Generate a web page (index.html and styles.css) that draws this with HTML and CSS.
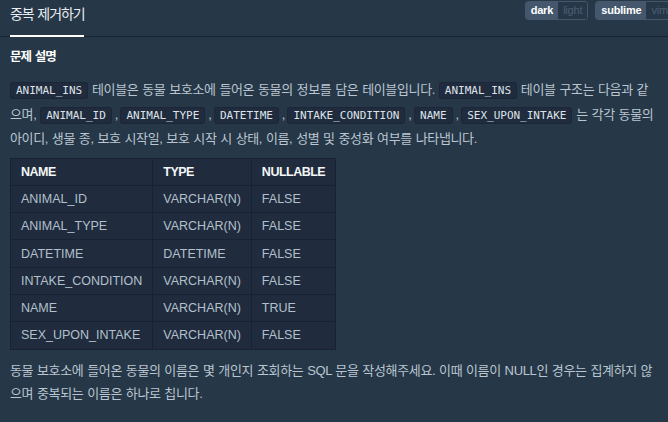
FILE: index.html
```html
<!DOCTYPE html>
<html lang="ko">
<head>
<meta charset="utf-8">
<title>중복 제거하기</title>
<link rel="stylesheet" href="styles.css">
</head>
<body>
<div class="page">
  <header class="topbar">
    <div class="tab">중복 제거하기</div>
    <div class="toggles">
      <div class="seg"><span class="opt on">dark</span><span class="opt off">light</span></div>
      <div class="seg"><span class="opt on">sublime</span><span class="opt off">vim</span></div>
    </div>
  </header>
  <section class="desc">
    <h6 class="title">문제 설명</h6>
    <p class="text"><code>ANIMAL_INS</code> 테이블은 동물 보호소에 들어온 동물의 정보를 담은 테이블입니다. <code>ANIMAL_INS</code> 테이블 구조는 다음과 같으며, <code>ANIMAL_ID</code><span class="sep"> , </span><code>ANIMAL_TYPE</code><span class="sep"> , </span><code>DATETIME</code><span class="sep"> , </span><code>INTAKE_CONDITION</code><span class="sep"> , </span><code>NAME</code><span class="sep"> , </span><code>SEX_UPON_INTAKE</code> 는 각각 동물의 아이디, 생물 종, 보호 시작일, 보호 시작 시 상태, 이름, 성별 및 중성화 여부를 나타냅니다.</p>
    <table class="schema">
      <thead>
        <tr><th class="c1">NAME</th><th class="c2">TYPE</th><th class="c3">NULLABLE</th></tr>
      </thead>
      <tbody>
        <tr><td>ANIMAL_ID</td><td>VARCHAR(N)</td><td>FALSE</td></tr>
        <tr><td>ANIMAL_TYPE</td><td>VARCHAR(N)</td><td>FALSE</td></tr>
        <tr><td>DATETIME</td><td>DATETIME</td><td>FALSE</td></tr>
        <tr><td>INTAKE_CONDITION</td><td>VARCHAR(N)</td><td>FALSE</td></tr>
        <tr><td>NAME</td><td>VARCHAR(N)</td><td>TRUE</td></tr>
        <tr><td>SEX_UPON_INTAKE</td><td>VARCHAR(N)</td><td>FALSE</td></tr>
      </tbody>
    </table>
    <p class="text after">동물 보호소에 들어온 동물의 이름은 몇 개인지 조회하는 SQL 문을 작성해주세요. 이때 이름이 NULL인 경우는 집계하지 않으며 중복되는 이름은 하나로 칩니다.</p>
  </section>
</div>
</body>
</html>
```
FILE: styles.css
```css
html, body {
  margin: 0;
  padding: 0;
  background: #263747;
  overflow: hidden;
}
body {
  font-family: "Liberation Sans", "Noto Sans CJK KR", sans-serif;
  color: #b2c0cc;
  width: 668px;
  height: 422px;
}
.page {
  width: 668px;
}
.topbar {
  display: flex;
  justify-content: space-between;
  align-items: flex-start;
  height: 36px;
  border-bottom: 1px solid #172334;
  padding-left: 10px;
  margin-right: -6px;
}
.tab {
  box-sizing: border-box;
  height: 37px;
  margin-bottom: -1px;
  padding-top: 4px;
  border-bottom: 2px solid #ffffff;
  color: #e9edf1;
  font-size: 14px;
  letter-spacing: -1.1px;
  word-spacing: 1px;
  line-height: 20px;
}
.toggles {
  display: flex;
  gap: 7px;
  margin-top: 1px;
}
.seg {
  display: flex;
  border: 1px solid #44576c;
  border-radius: 3px;
  overflow: hidden;
  height: 17px;
}
.opt {
  font-size: 11px;
  font-weight: 700;
  line-height: 17px;
  padding: 0 5px;
  letter-spacing: -0.2px;
}
.opt.on {
  background: #44576c;
  color: #ffffff;
}
.opt.off {
  background: #263747;
  color: #4b5f75;
  font-weight: 400;
}
.desc {
  padding: 0 12px 0 10px;
}
.title {
  margin: 11px 0 0;
  font-size: 12.5px;
  font-weight: 700;
  line-height: 18px;
  color: #ffffff;
  letter-spacing: -0.9px;
  word-spacing: 1px;
}
.text {
  margin: 12px 0 0;
  font-size: 13px;
  line-height: 23.5px;
  letter-spacing: -0.35px;
  word-spacing: 0.5px;
  color: #bac6d1;
}
.text.after {
  margin-top: 9px;
}
.sep {
  letter-spacing: -0.75px;
  word-spacing: 0;
}
code {
  font-family: "DejaVu Sans Mono", monospace;
  font-size: 11px;
  letter-spacing: 0;
  word-spacing: 0;
  background: #202b3d;
  border: 1px solid #1b2638;
  border-radius: 3px;
  padding: 1px 5px;
  color: #dde3e9;
}
.schema {
  margin-top: 7px;
  border-collapse: collapse;
  background: #202b3d;
  font-family: "Liberation Sans", sans-serif;
  font-size: 12.5px;
}
.schema th, .schema td {
  border: 1px solid #172334;
  height: 26.3px;
  padding: 0 10px;
  text-align: left;
  white-space: nowrap;
}
.schema th {
  color: #f4f6f8;
  font-weight: 700;
  letter-spacing: -0.5px;
}
.schema td {
  color: #b2c0cc;
}
.c1 { width: 116px; }
.c2 { width: 76px; }
.c3 { width: 62px; }
```
